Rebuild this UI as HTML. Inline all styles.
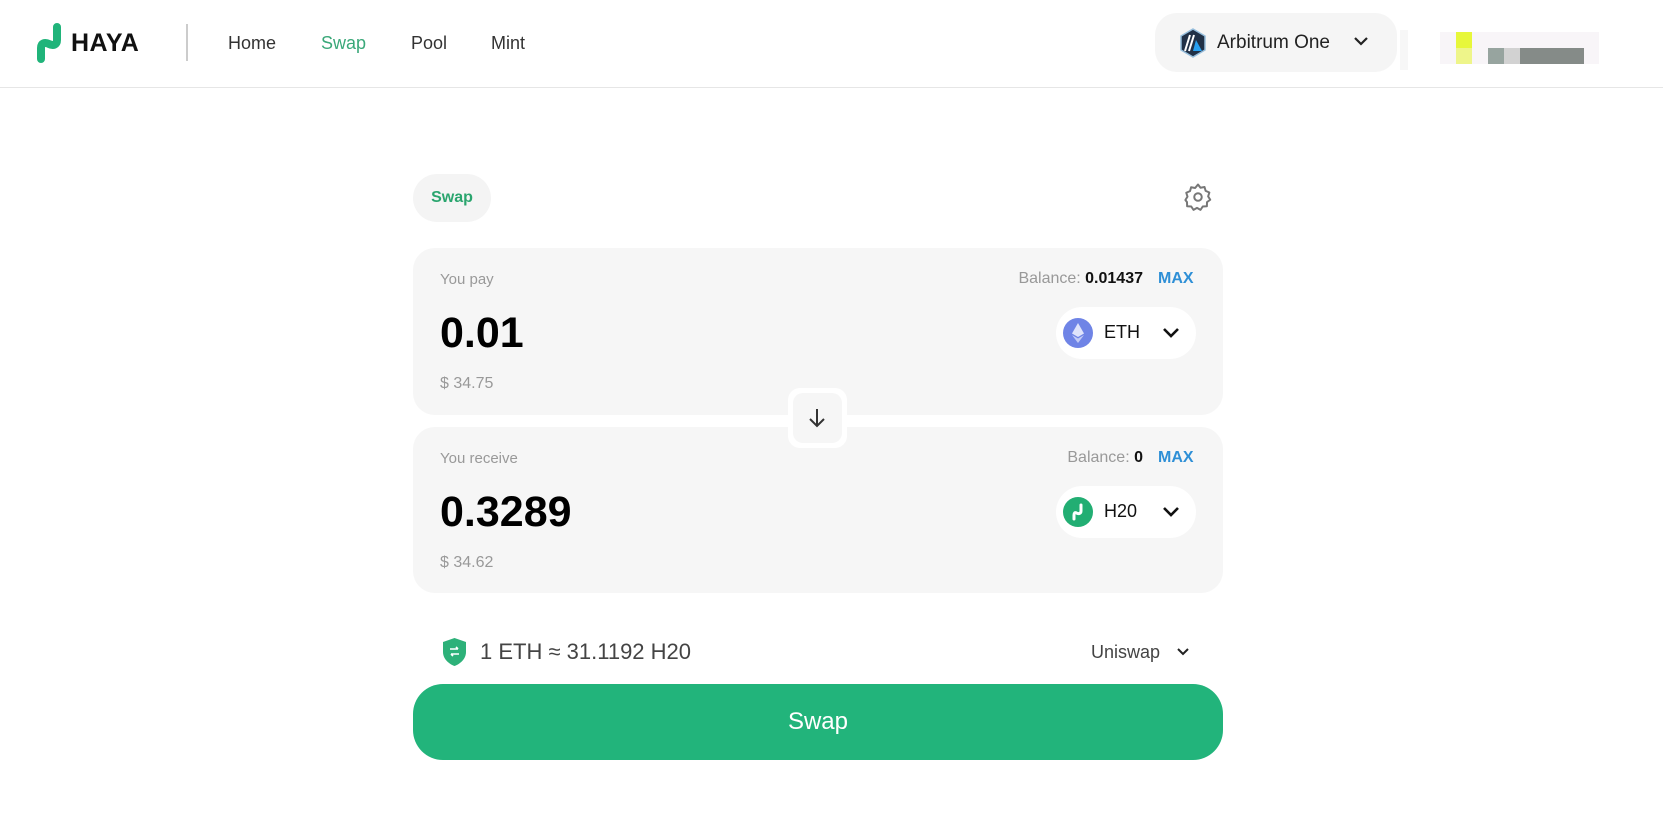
<!DOCTYPE html>
<html><head><meta charset="utf-8"><style>
*{box-sizing:border-box;margin:0;padding:0}
body{width:1663px;height:832px;background:#fff;font-family:"Liberation Sans",sans-serif;position:relative;overflow:hidden;color:#111}
.abs{position:absolute}
.hdr{left:0;top:0;width:1663px;height:88px;border-bottom:1px solid #e6e6e6}
.nav{top:33px;font-size:18px;color:#333;font-weight:500}
.card{left:413px;width:810px;background:#f6f6f6;border-radius:22px}
.lbl{font-size:15px;color:#999}
.amt{font-size:43px;font-weight:bold;color:#000}
.usd{font-size:16px;color:#999}
.pill{width:140px;height:52px;background:#fff;border-radius:26px}
</style></head><body>
<div class="abs hdr"></div>
<svg class="abs" style="left:30px;top:22px" width="38" height="42" viewBox="0 0 38 42">
<path d="M27 5 L27 18 C27 23 23 24 19 22 C15 20 11 21 11 26 L11 37" stroke="#20b47a" stroke-width="8" fill="none" stroke-linecap="round"/>
</svg>
<div class="abs" style="left:71px;top:29px;font-size:25px;font-weight:bold;letter-spacing:0.5px;color:#111">HAYA</div>
<div class="abs" style="left:186px;top:24px;width:2px;height:37px;background:#ccc"></div>
<div class="abs nav" style="left:228px">Home</div>
<div class="abs nav" style="left:321px;color:#3aa879">Swap</div>
<div class="abs nav" style="left:411px">Pool</div>
<div class="abs nav" style="left:491px">Mint</div>
<div class="abs" style="left:1155px;top:13px;width:242px;height:59px;background:#f5f5f5;border-radius:22px"></div>
<svg class="abs" style="left:1178px;top:28px" width="30" height="30" viewBox="0 0 30 30"><polygon points="15,1 27,8 27,22 15,29 3,22 3,8" fill="#213147" stroke="#96bedc" stroke-width="1.5"/><path d="M12 7 L7 23 M16 7 L11 23" stroke="#fff" stroke-width="2"/><path d="M18 12 L24 23 L15 23Z" fill="#28a0f0"/></svg>
<div class="abs" style="left:1217px;top:32px;font-size:19px;color:#222">Arbitrum One</div>
<svg class="abs" style="left:1353px;top:35px" width="16" height="12" viewBox="0 0 16 12"><path d="M2 3 L8 9 L14 3" stroke="#222" stroke-width="2.2" fill="none"/></svg>
<div class="abs" style="left:1400px;top:30px;width:8px;height:40px;background:#f7f7f7"></div>
<div class="abs" style="left:1440px;top:32px;width:159px;height:32px;background:#f8f5f8"></div>
<div class="abs" style="left:1456px;top:32px;width:16px;height:16px;background:#e7f73a"></div>
<div class="abs" style="left:1456px;top:48px;width:16px;height:16px;background:#eef58a"></div>
<div class="abs" style="left:1488px;top:48px;width:16px;height:16px;background:#97a49f"></div>
<div class="abs" style="left:1504px;top:48px;width:16px;height:16px;background:#d2d2d2"></div>
<div class="abs" style="left:1520px;top:48px;width:64px;height:16px;background:#858b88"></div>

<div class="abs" style="left:413px;top:174px;width:78px;height:48px;background:#f4f4f4;border-radius:24px;color:#2aa56e;font-weight:bold;font-size:16px;text-align:center;line-height:48px">Swap</div>
<svg class="abs" style="left:1183px;top:182px" width="30" height="30" viewBox="0 0 24 24" fill="none" stroke="#777" stroke-width="1.6"><circle cx="12" cy="12" r="3"/><path d="M12 2 l2 2.6 3.2-.6.9 3.1 3 1.3-1 3.1 1.7 2.7-2.6 1.9-.1 3.3-3.3.2-1.8 2.7-2.8-1.6-2.8 1.6-1.8-2.7-3.3-.2-.1-3.3L1.9 14.4 3.6 11.7 2.6 8.6l3-1.3.9-3.1 3.2.6z" stroke-linejoin="round"/></svg>

<div class="abs card" style="top:248px;height:167px"></div>
<div class="abs lbl" style="left:440px;top:271px">You pay</div>
<div class="abs" style="right:520px;top:270px;font-size:16px;color:#999">Balance: <b style="color:#111">0.01437</b></div>
<div class="abs" style="left:1158px;top:270px;font-size:16px;color:#2e8fd6;font-weight:bold">MAX</div>
<div class="abs amt" style="left:440px;top:309px">0.01</div>
<div class="abs usd" style="left:440px;top:375px">$ 34.75</div>
<div class="abs pill" style="left:1056px;top:307px"></div>
<svg class="abs" style="left:1063px;top:318px" width="30" height="30" viewBox="0 0 30 30"><circle cx="15" cy="15" r="15" fill="#6f84e6"/><path d="M15 5 L21 15.5 L15 19 L9 15.5Z" fill="#dfe4fb"/><path d="M9 17 L15 20.5 L21 17 L15 25Z" fill="#c3ccf6"/></svg>
<div class="abs" style="left:1104px;top:322px;font-size:18px;font-weight:500">ETH</div>
<svg class="abs" style="left:1162px;top:326px" width="18" height="14" viewBox="0 0 18 14"><path d="M2 3 L9 10 L16 3" stroke="#111" stroke-width="2.6" fill="none"/></svg>

<div class="abs card" style="top:427px;height:166px"></div>
<div class="abs lbl" style="left:440px;top:450px">You receive</div>
<div class="abs" style="right:520px;top:449px;font-size:16px;color:#999">Balance: <b style="color:#111">0</b></div>
<div class="abs" style="left:1158px;top:449px;font-size:16px;color:#2e8fd6;font-weight:bold">MAX</div>
<div class="abs amt" style="left:440px;top:488px">0.3289</div>
<div class="abs usd" style="left:440px;top:554px">$ 34.62</div>
<div class="abs pill" style="left:1056px;top:486px"></div>
<svg class="abs" style="left:1063px;top:497px" width="30" height="30" viewBox="0 0 30 30"><circle cx="15" cy="15" r="15" fill="#22ae73"/><path d="M18 8 L18 14 C18 17 15 17 13.5 16 C12 15 11 16 11 18 L11 22" stroke="#fff" stroke-width="3" fill="none" stroke-linecap="round"/></svg>
<div class="abs" style="left:1104px;top:501px;font-size:18px;font-weight:500">H20</div>
<svg class="abs" style="left:1162px;top:505px" width="18" height="14" viewBox="0 0 18 14"><path d="M2 3 L9 10 L16 3" stroke="#111" stroke-width="2.6" fill="none"/></svg>

<div class="abs" style="left:788px;top:388px;width:59px;height:60px;background:#fff;border-radius:12px"></div>
<div class="abs" style="left:793px;top:393px;width:49px;height:50px;background:#f6f6f6;border-radius:10px"></div>
<svg class="abs" style="left:806px;top:406px" width="22" height="24" viewBox="0 0 22 24"><path d="M11 3 L11 20 M4 13 L11 20 L18 13" stroke="#333" stroke-width="2" fill="none"/></svg>

<svg class="abs" style="left:441px;top:637px" width="27" height="30" viewBox="0 0 27 30"><path d="M13.5 1 L25 5 L25 15 C25 22 19 27 13.5 29 C8 27 2 22 2 15 L2 5Z" fill="#2db179"/><path d="M9 12 L17 12 M15 10 L17 12 M18 17 L10 17 M12 19 L10 17" stroke="#fff" stroke-width="1.6" fill="none"/></svg>
<div class="abs" style="left:480px;top:639px;font-size:22px;color:#444">1 ETH ≈ 31.1192 H20</div>
<div class="abs" style="left:1091px;top:642px;font-size:18px;color:#444">Uniswap</div>
<svg class="abs" style="left:1176px;top:646px" width="14" height="12" viewBox="0 0 14 12"><path d="M2 3 L7 8 L12 3" stroke="#222" stroke-width="2" fill="none"/></svg>

<div class="abs" style="left:413px;top:684px;width:810px;height:76px;background:#22b47b;border-radius:30px;color:#fff;font-size:24px;font-weight:500;text-align:center;line-height:76px">Swap</div>
</body></html>
